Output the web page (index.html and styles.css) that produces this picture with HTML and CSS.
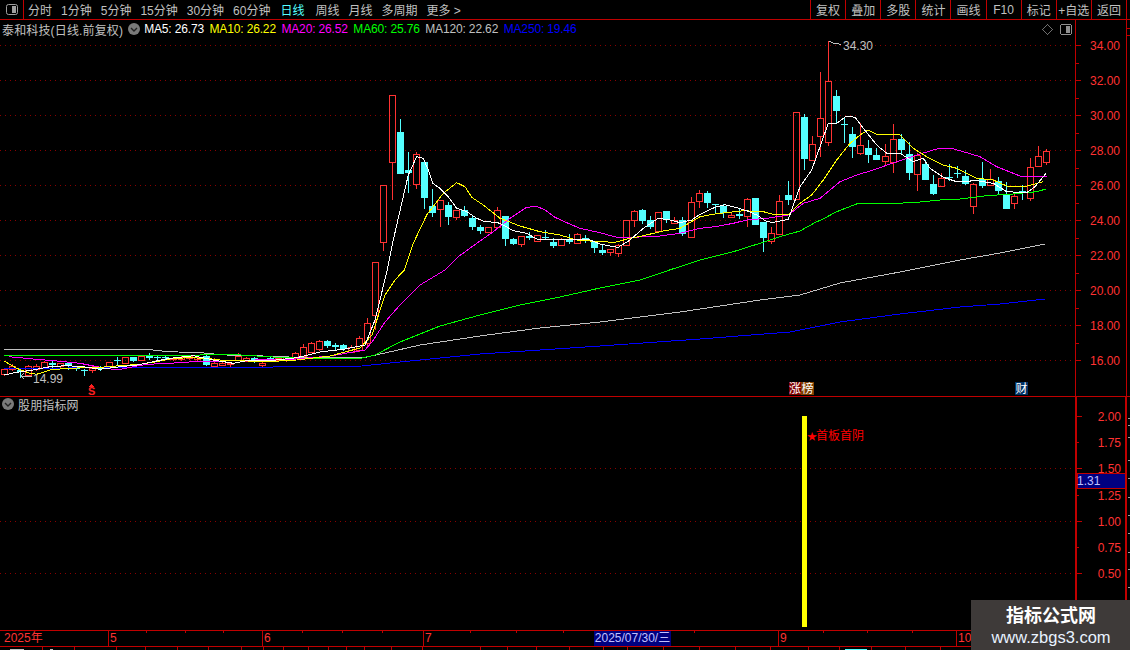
FILE: index.html
```html
<!DOCTYPE html>
<html lang="zh-CN">
<head>
<meta charset="utf-8">
<title>泰和科技 日线</title>
<link rel="stylesheet" href="styles.css">
</head>
<body>
<div class="app">
  <header class="topbar">
    <div class="layout-btn">
      <svg class="panel-icon" viewBox="0 0 12 11"><rect x="0.5" y="0.5" width="11" height="10" rx="2" class="pi-box"/><rect x="6" y="2" width="4" height="7" class="pi-fill"/></svg>
    </div>
    <nav class="periods">
      <span>分时</span><span>1分钟</span><span>5分钟</span><span>15分钟</span><span>30分钟</span><span>60分钟</span>
      <span class="active">日线</span><span>周线</span><span>月线</span><span>多周期</span><span>更多 &gt;</span>
    </nav>
    <div class="actions">
      <span>复权</span><span>叠加</span><span>多股</span><span>统计</span><span>画线</span><span>F10</span><span>标记</span><span>+自选</span><span>返回</span>
    </div>
  </header>

  <section class="pane pane-main">
    <svg id="mainChart" class="chart" viewBox="0 20 1130 376"></svg>
    <div class="legend">
      <span class="stock">泰和科技(日线.前复权)</span>
      <svg class="chev" viewBox="0 0 12 12"><circle cx="6" cy="6" r="6"/><path d="M3 5l3 3 3-3"/></svg>
      <span class="ma ma5">MA5: 26.73</span>
      <span class="ma ma10">MA10: 26.22</span>
      <span class="ma ma20">MA20: 26.52</span>
      <span class="ma ma60">MA60: 25.76</span>
      <span class="ma ma120">MA120: 22.62</span>
      <span class="ma ma250">MA250: 19.46</span>
    </div>
  </section>

  <section class="pane pane-sub">
    <svg id="subChart" class="chart" viewBox="0 397 1130 233"></svg>
    <div class="legend legend-sub">
      <svg class="chev" viewBox="0 0 12 12"><circle cx="6" cy="6" r="6"/><path d="M3 5l3 3 3-3"/></svg>
      <span class="stock">股朋指标网</span>
    </div>
  </section>

  <footer class="timeaxis">
    <svg id="timeTicks" class="ticks" viewBox="0 631 1130 15"></svg>
    <span class="seg seg-year">2025年</span>
    <span class="seg seg-may">5</span>
    <span class="seg seg-jun">6</span>
    <span class="seg seg-jul">7</span>
    <span class="seg seg-aug"></span>
    <span class="seg seg-sep">9</span>
    <span class="seg seg-oct">10</span>
    <span class="date-box">2025/07/30/三</span>
  </footer>
  <svg id="tabStrip" class="tabstrip" viewBox="0 647 1130 3"></svg>

  <aside class="watermark">
    <strong>指标公式网</strong>
    <span>www.zbgs3.com</span>
  </aside>
</div>
<script src="chart.js"></script>
</body>
</html>
```

FILE: styles.css
```css
* { box-sizing: border-box; }
html, body { margin: 0; padding: 0; background: #000; }
body {
  font-family: "Liberation Sans", "Noto Sans CJK SC", sans-serif;
  font-size: 12px;
  color: #c0c0c0;
}
.app {
  position: relative;
  width: 1130px;
  height: 650px;
  overflow: hidden;
  background: #000;
  display: flex;
  flex-direction: column;
}

/* top bar */
.topbar {
  height: 20px;
  flex: none;
  display: flex;
  align-items: stretch;
  border-bottom: 1px solid #c00000;
}
.layout-btn {
  width: 24px;
  flex: none;
  display: flex;
  align-items: center;
  justify-content: center;
  border-right: 1px solid #c00000;
}
.panel-icon { width: 12px; height: 11px; }
.pi-box { fill: none; stroke: #a0a0a0; }
.pi-fill { fill: #a0a0a0; }
.periods {
  display: flex;
  align-items: center;
  gap: 9px;
  padding-left: 4px;
  white-space: nowrap;
}
.periods .active { color: #54ffff; margin-left: 1px; margin-right: 2px; }
.actions {
  margin-left: auto;
  margin-right: 3px;
  width: 317px;
  display: flex;
}
.actions span {
  flex: 1;
  display: flex;
  align-items: center;
  justify-content: center;
  white-space: nowrap;
  border-left: 1px solid #c00000;
}
.actions span:last-child { border-right: 1px solid #c00000; }

/* panes */
.pane { position: relative; flex: none; }
.pane-main { height: 377px; border-bottom: 1px solid #c00000; }
.pane-sub { height: 233px; }
.chart { display: block; width: 1130px; height: 100%; shape-rendering: crispEdges; }
.pane-main .chart { height: 376px; }

.legend {
  position: absolute;
  left: 2px;
  top: 1px;
  display: flex;
  align-items: center;
  height: 16px;
  white-space: nowrap;
}
.legend .stock { letter-spacing: 0.15px; }
.chev { width: 12px; height: 12px; margin: 0 4px 0 5px; flex: none; }
.chev circle { fill: #7a7a7a; }
.chev path { fill: none; stroke: #222; stroke-width: 1.4; }
.ma { margin-right: 5.5px; letter-spacing: -0.15px; }
.ma5 { color: #fff; }
.ma10 { color: #ffff00; }
.ma20 { color: #ff00ff; }
.ma60 { color: #00ff00; }
.ma120 { color: #c0c0c0; }
.ma250 { color: #0000ff; }
.legend-sub { top: -1px; left: 0; }
.legend-sub .chev { margin: 0 4px 0 2px; }

/* svg paint */
.grid { stroke: #8a0000; stroke-width: 1; stroke-dasharray: 1 4; fill: none; }
.rule { stroke: #c00000; stroke-width: 1; fill: none; }
.rule-bold { stroke: #c00000; stroke-width: 2; fill: none; }
.tick-grey { stroke: #a0a0a0; stroke-width: 1; }
.cup { stroke: #ff3232; fill: none; stroke-width: 1; }
.cdn { fill: #54ffff; stroke: none; }
.cdn-w { stroke: #54ffff; stroke-width: 1; }
.ln { fill: none; stroke-width: 1; }
.l5 { stroke: #fff; }
.l10 { stroke: #ffff00; }
.l20 { stroke: #ff00ff; }
.l60 { stroke: #00ff00; }
.l120 { stroke: #c0c0c0; }
.l250 { stroke: #0000ff; }
.px { fill: #ff3232; font-size: 12px; text-anchor: end; }
.note { fill: #c0c0c0; font-size: 12px; }
.note-line { fill: none; stroke: #c0c0c0; stroke-width: 1; }
.s-mark { fill: #ff2020; font-size: 11px; font-weight: bold; }
.s-tri { fill: #ff2020; }
.tag { fill: #fff; font-size: 12px; text-anchor: middle; }
.tag-a { fill: #800000; }
.tag-b { fill: #804000; }
.tag-c { fill: #003366; }
.diamond { fill: none; stroke: #707070; }
.icon-box { fill: none; stroke: #909090; }
.icon-fill { fill: #909090; }
.bar { fill: #ffff00; }
.sig { fill: #ff0000; font-size: 12px; }
.valbox { fill: #000080; stroke: #c00000; stroke-width: 1; }
.valtxt { fill: #c0c0ff; font-size: 12px; }

/* time axis */
.timeaxis {
  position: relative;
  height: 17px;
  flex: none;
  display: flex;
  align-items: center;
  color: #ff3232;
  border-top: 1px solid #c00000;
  border-bottom: 1px solid #c00000;
}
.ticks { position: absolute; left: 0; top: 0; width: 1130px; height: 15px; }
.seg { height: 100%; line-height: 15px; padding-left: 1px; border-left: 1px solid #c00000; flex: none; }
.seg-year { width: 108px; border-left: 0; padding-left: 4px; }
.seg-may { width: 154px; }
.seg-jun { width: 161px; }
.seg-jul { width: 171px; }
.seg-aug { width: 184px; border-left: 0; }
.seg-sep { width: 178px; }
.seg-oct { width: 174px; }
.date-box {
  position: absolute;
  left: 594px;
  top: 0;
  width: 77px;
  height: 15px;
  line-height: 15px;
  text-align: center;
  background: #000080;
  color: #c0c0ff;
  white-space: nowrap;
}
.tabstrip { display: block; flex: none; width: 1130px; height: 3px; shape-rendering: crispEdges; }
.tab-cyan { stroke: #54ffff; }
.tab-white { stroke: #c0c0c0; }

/* watermark */
.watermark {
  position: absolute;
  left: 971px;
  top: 600px;
  width: 159px;
  height: 50px;
  background: #3e3a39;
  display: flex;
  flex-direction: column;
  align-items: center;
  color: #fff;
  padding: 4px 0 0 1px;
}
.watermark strong { font-size: 18px; line-height: 24px; font-weight: bold; }
.watermark span { font-size: 16.5px; line-height: 18px; color: #e8f2ff; font-family: "Liberation Sans", sans-serif; }
```

FILE: chart.js
```js
var NS = 'http://www.w3.org/2000/svg';
function el(parent, tag, attrs, text) {
  var e = document.createElementNS(NS, tag);
  for (var k in attrs) e.setAttribute(k, attrs[k]);
  if (text !== undefined) e.textContent = text;
  parent.appendChild(e);
  return e;
}
function hline(p, y, x1, x2, cls) { el(p, 'line', { x1: x1, x2: x2, y1: y, y2: y, 'class': cls }); }
function vline(p, x, y1, y2, cls) { el(p, 'line', { x1: x, x2: x, y1: y1, y2: y2, 'class': cls }); }
function z(x0, y0, pts) {
  var out = [];
  for (var i = 0; i < pts.length; i += 2) out.push([x0 + pts[i] / 3, y0 + pts[i + 1] / 3]);
  return out;
}
function poly(p, pts, cls) {
  el(p, 'polyline', { points: pts.map(function (q) { return q[0].toFixed(1) + ',' + q[1].toFixed(1); }).join(' '), 'class': 'ln ' + cls });
}

/* x, wickTop, bodyTop, bodyBottom, wickBottom, up(1)/down(0) */
var candles = [
[4,368,369,374,376,1],[12,364,366,369,371,1],[20,369,370,372,378,0],[28,365,366,375,376,1],[36,364,366,369,371,1],
[44,361,362,368,369,1],[52,361,363,365,368,0],[60,363,363,366,368,1],[68,363,363,366,370,0],[76,366,367,369,371,0],
[84,369,370,371,376,0],[92,366,368,370,373,1],[100,366,367,369,371,0],[109,362,362,367,368,1],[117,357,360,361,365,0],
[125,357,357,363,364,1],[133,357,357,361,362,0],[141,356,356,360,361,1],[149,353,356,358,360,0],[157,355,357,358,361,0],
[165,355,357,358,360,0],[173,357,358,359,361,1],[181,356,357,359,361,1],[189,355,356,358,360,1],[197,356,357,359,361,1],
[206,355,356,365,366,0],[214,358,363,366,367,1],[222,361,363,365,366,1],[230,362,363,364,367,1],[238,353,356,360,361,1],
[246,357,358,361,362,1],[254,357,358,362,363,0],[262,362,363,365,367,1],[270,357,358,360,362,0],[278,357,358,360,361,1],
[286,356,357,360,362,1],[295,352,353,358,359,1],[303,344,347,356,357,1],[311,342,343,352,353,1],[319,340,341,349,351,1],
[327,340,341,346,348,0],[335,343,345,347,350,0],[343,344,345,349,351,0],[351,345,347,352,353,1],[359,336,338,350,352,1],
[367,318,323,343,347,1],[375,262,262,315,330,1],[383,185,185,242,251,1],[392,95,95,162,200,1],[400,119,132,174,174,0],
[408,152,170,173,193,0],[416,152,154,184,189,1],[424,162,162,198,209,0],[432,189,206,213,217,0],[440,200,200,209,227,1],
[448,202,205,217,225,0],[456,210,210,217,220,1],[464,206,210,216,217,0],[472,215,218,227,230,0],[480,225,227,231,234,0],
[488,227,227,232,233,1],[497,207,210,227,228,1],[505,216,216,239,246,0],[513,238,239,244,245,0],[521,236,236,244,247,1],
[529,232,236,238,240,0],[537,235,235,241,241,1],[545,230,237,238,240,0],[553,238,242,246,248,0],[561,238,239,245,245,1],
[569,234,240,242,244,0],[577,233,234,243,243,1],[585,235,238,240,243,0],[594,241,242,248,253,0],[602,244,250,253,255,0],
[610,249,249,252,256,1],[618,244,245,253,257,1],[626,220,220,245,245,1],[634,210,211,220,227,1],[642,209,210,221,224,0],
[650,216,220,227,229,0],[658,212,212,231,231,1],[666,211,211,220,223,0],[674,217,220,223,223,1],[682,217,220,234,236,0],
[691,197,202,237,237,1],[699,190,193,201,208,1],[707,191,193,203,208,0],[715,204,204,205,213,0],[723,204,206,213,218,0],
[731,213,215,217,217,1],[739,209,214,216,219,0],[747,198,199,216,227,1],[755,198,198,225,225,0],[763,222,222,238,252,0],
[771,227,233,241,244,1],[779,195,201,234,234,1],[788,181,195,200,205,0],[796,112,112,199,199,1],[804,114,117,159,170,0],
[812,136,144,160,160,1],[820,72,118,136,157,1],[828,41,81,142,146,1],[836,90,96,111,123,0],[844,117,124,125,143,0],
[852,127,134,147,158,0],[860,123,145,153,155,1],[868,140,148,155,163,0],[876,148,155,160,160,0],[885,144,156,161,166,1],
[893,124,139,162,173,1],[901,134,139,150,154,0],[909,142,154,173,180,0],[917,153,155,174,191,1],[925,160,164,180,180,0],
[933,175,184,194,195,0],[941,173,178,186,187,1],[949,164,177,178,181,0],[957,166,173,174,178,0],[965,170,176,184,185,0],
[973,183,184,206,214,1],[982,162,179,186,188,0],[990,169,179,185,186,1],[998,177,181,191,195,0],[1006,182,195,209,209,0],
[1014,193,196,203,209,1],[1022,185,191,192,200,0],[1030,158,167,198,201,1],[1038,146,156,166,166,1],[1046,149,151,162,165,1]
];

var white = z(0, 335, [12,120,50,112,100,105,150,95,200,92,250,95,300,103,360,95,410,90,510,70,580,62,640,75,700,85,750,75,800,78,890,68])
  .concat([[320,352],[345,349],[365,345],[375,320]])
  .concat(z(360, 90, [82,540,100,450,125,340,145,255,170,200,190,205,205,240,218,280,240,295,265,320,290,355,320,365,350,385,375,395,410,397,430,405,460,422,500,430,530,447,560,447,600,450,650,448,690,450]))
  .concat(z(600, 170, [0,222,30,228,55,232,90,210,130,175,175,145,210,150,240,158,275,150,300,133,345,112,375,104,400,110,440,122,470,135,500,155,520,157,565,148]))
  .concat(z(780, 40, [60,440,95,390,120,320,145,250,170,250,200,228,225,232,250,265,290,315,320,340,360,340,400,365,430,355,450,385,490,412,530,425,590,422,640,430,680,455,740,458,765,440,798,400]));

var yellow = z(0, 335, [12,78,50,100,90,115,110,118,150,105,200,100,300,97,360,92,420,88,470,80,510,72,560,68,620,70,660,75,800,80,890,75])
  .concat([[330,356],[360,348],[372,335],[385,295],[395,280]])
  .concat(z(360, 90, [133,540,160,460,200,375,250,310,290,278,315,290,335,322,370,345,420,385,480,408,540,425,600,435,650,450,720,455]))
  .concat(z(600, 170, [0,213,40,218,90,205,130,197,190,183,240,175,300,140,345,132,430,122,490,125,520,133,565,135]))
  .concat(z(780, 40, [60,490,95,465,130,420,170,360,210,310,240,285,265,270,290,283,360,285,400,325,440,350,490,375,530,385,590,415,640,420,680,438,730,441,790,425]));

var magenta = z(0, 335, [27,65,100,72,170,78,240,85,300,97,350,105,400,95,440,88,510,85,580,80,660,78,730,76,890,72])
  .concat([[330,356],[365,350],[372,342],[385,322],[400,305],[420,285]])
  .concat(z(360, 90, [255,540,295,500,350,460,400,425,450,385,500,352,530,349,555,360,585,382,620,398,660,415,720,428]))
  .concat(z(600, 170, [0,188,50,202,100,202,180,198,240,190,300,175,345,170,400,160,440,150,500,145,565,135]))
  .concat(z(780, 40, [70,490,120,475,180,425,230,405,280,390,350,365,410,345,470,327,510,324,550,335,600,350,650,380,720,408,800,408]));

var green = [[4,355],[150,355],[200,355],[210,354],[225,354],[273,357],[300,358],[362,358],[375,355],[400,342],[440,326],[480,315],[520,305],[560,297],[600,288],[640,280]]
  .concat(z(600, 170, [215,298,300,270,400,245,480,220,540,200,600,183,650,155]))
  .concat(z(780, 40, [123,540,170,515,235,490,280,492,340,490,400,488,480,480,540,477,620,467,700,462,770,455,798,447]));

var grey = z(0, 335, [12,43,438,43,486,48,534,51,606,53,630,56,680,60,760,62,850,65,900,68])
  .concat([[362,358],[385,353],[420,345],[480,336],[540,328],[600,322],[680,312],[760,300],[800,295],[840,283],[900,272],[960,260],[1000,253],[1045,244]]);

var blue = [[4,369],[100,367.5],[273,367],[362,366],[400,362],[480,354],[600,346],[700,339],[790,332],[840,322],[900,314],[960,307],[1000,304],[1045,299]];

(function main() {
  var s = document.getElementById('mainChart');
  var i, y;
  for (i = 0; i < 10; i++) {
    y = 45.5 + 35 * i;
    hline(s, y, 0, 1075, 'grid');
    hline(s, y, 1076, 1081, 'rule');
    if (i < 9) hline(s, y + 17.5, 1076, 1079, 'rule');
    el(s, 'text', { x: 1120, y: y + 4.5, 'class': 'px' }, (34 - 2 * i).toFixed(2));
  }
  vline(s, 1075.5, 20, 396, 'rule');
  vline(s, 1126.5, 20, 396, 'rule');
  hline(s, 28.5, 1127, 1130, 'rule');
  hline(s, 35.5, 1127, 1130, 'rule');

  candles.forEach(function (c) {
    var x = c[0], cx = x + 0.5;
    if (c[5]) {
      vline(s, cx, c[1], c[2], 'cup');
      vline(s, cx, c[3], c[4], 'cup');
      el(s, 'rect', { x: x - 2.5, y: c[2] + 0.5, width: 6, height: c[3] - c[2], 'class': 'cup' });
    } else {
      vline(s, cx, c[1], c[4], 'cdn-w');
      el(s, 'rect', { x: x - 3, y: c[2], width: 7, height: Math.max(c[3] - c[2], 1), 'class': 'cdn' });
    }
  });

  poly(s, blue, 'l250');
  poly(s, grey, 'l120');
  poly(s, green, 'l60');
  poly(s, magenta, 'l20');
  poly(s, yellow, 'l10');
  poly(s, white, 'l5');

  /* high / low notes */
  el(s, 'polyline', { points: '829,41 833,43 837,43 841,45', 'class': 'note-line' });
  el(s, 'text', { x: 843, y: 50, 'class': 'note' }, '34.30');
  el(s, 'polyline', { points: '24,373 21,376 24,379', 'class': 'note-line' });
  hline(s, 376.5, 21, 32, 'note-line');
  el(s, 'text', { x: 33, y: 383, 'class': 'note' }, '14.99');

  /* event tags */
  el(s, 'path', { d: 'M91 384l3 3h-6z', 'class': 's-tri' });
  el(s, 'text', { x: 88, y: 395, 'class': 's-mark' }, 'S');
  el(s, 'rect', { x: 789, y: 382, width: 12, height: 13, 'class': 'tag-a' });
  el(s, 'rect', { x: 801, y: 382, width: 13, height: 13, 'class': 'tag-b' });
  el(s, 'text', { x: 795, y: 393, 'class': 'tag' }, '涨');
  el(s, 'text', { x: 807.5, y: 393, 'class': 'tag' }, '榜');
  el(s, 'rect', { x: 1015, y: 382, width: 13, height: 13, 'class': 'tag-c' });
  el(s, 'text', { x: 1021.5, y: 393, 'class': 'tag' }, '财');

  /* pane controls */
  el(s, 'path', { d: 'M1047.5 24.5l5 5-5 5-5-5z', 'class': 'diamond' });
  el(s, 'rect', { x: 1060.5, y: 24.5, width: 11, height: 10, rx: 2, 'class': 'icon-box' });
  el(s, 'rect', { x: 1066, y: 26, width: 4, height: 7, 'class': 'icon-fill' });
})();

(function sub() {
  var s = document.getElementById('subChart');
  [468.5, 521.5, 573.5].forEach(function (y) { hline(s, y, 0, 1075, 'grid'); });
  var labels = ['2.00', '1.75', '1.50', '1.25', '1.00', '0.75', '0.50'];
  labels.forEach(function (t, i) {
    var y = Math.round(416 + i * 26.2) + 0.5;
    hline(s, y, 1076, i % 2 ? 1079 : 1082, 'rule');
    el(s, 'text', { x: 1121, y: y + 4.5, 'class': 'px' }, t);
  });
  vline(s, 1076, 397, 630, 'rule-bold');
  vline(s, 1126, 397, 630, 'rule-bold');
  [418, 425, 437, 460, 478, 497, 515, 533, 552, 569, 587, 605, 622].forEach(function (y) {
    hline(s, y + 0.5, 1128, 1130, 'tick-grey');
  });
  el(s, 'rect', { x: 802, y: 416, width: 5, height: 211, 'class': 'bar' });
  var t = el(s, 'text', { 'class': 'sig', y: 440 });
  el(t, 'tspan', { x: 807, style: 'font-size:10px' }, '★');
  el(t, 'tspan', { x: 816 }, '首板首阴');
  el(s, 'rect', { x: 1077.5, y: 473.5, width: 48, height: 15, 'class': 'valbox' });
  el(s, 'text', { x: 1077, y: 485, 'class': 'valtxt' }, '1.31');
})();

(function axis() {
  var s = document.getElementById('timeTicks');
  [146, 185, 223, 302, 342, 382, 470, 516, 563, 694, 823, 867, 912, 1000].forEach(function (x) {
    vline(s, x + 0.5, 631, 633, 'rule');
  });
  var b = document.getElementById('tabStrip');
  [42, 74, 116, 145, 177, 208, 241, 263, 283, 308, 328, 346, 364, 391, 422, 480, 507, 536, 569, 603, 627, 663, 699, 735, 770, 808, 839, 871, 905, 940].forEach(function (x) {
    vline(b, x + 0.5, 647, 650, 'rule');
  });
  hline(b, 649.5, 10, 24, 'tab-white');
  hline(b, 649.5, 50, 53, 'tab-white');
  hline(b, 649.5, 845, 867, 'tab-cyan');
})();
```
